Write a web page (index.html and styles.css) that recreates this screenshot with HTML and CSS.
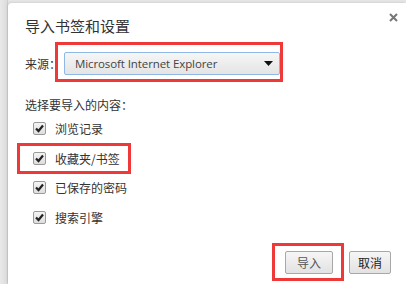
FILE: index.html
```html
<!DOCTYPE html>
<html>
<head>
<meta charset="utf-8">
<link rel="stylesheet" href="styles.css">
</head>
<body>
<div class="strip"></div>
<div class="dialog">
  <div class="close">
    <svg width="9" height="9" viewBox="0 0 9 9"><path d="M1 1L8 8M8 1L1 8" stroke="#777" stroke-width="2"/></svg>
  </div>
  <div class="title">导入书签和设置</div>
  <div class="source">
    <span class="label">来源：</span>
    <div class="select">
      <span>Microsoft Internet Explorer</span>
      <svg width="9" height="5" viewBox="0 0 9 5"><path d="M0 0H9L4.5 5Z" fill="#111"/></svg>
    </div>
  </div>
  <div class="heading">选择要导入的内容：</div>
  <div class="items">
    <div class="item"><span class="cb"><svg width="11" height="11" viewBox="0 0 11 11"><path d="M2 5.5L4.5 8L9 2.5" stroke="#222" stroke-width="2.2" fill="none"/></svg></span>浏览记录</div>
    <div class="item"><span class="cb"><svg width="11" height="11" viewBox="0 0 11 11"><path d="M2 5.5L4.5 8L9 2.5" stroke="#222" stroke-width="2.2" fill="none"/></svg></span>收藏夹/书签</div>
    <div class="item"><span class="cb"><svg width="11" height="11" viewBox="0 0 11 11"><path d="M2 5.5L4.5 8L9 2.5" stroke="#222" stroke-width="2.2" fill="none"/></svg></span>已保存的密码</div>
    <div class="item"><span class="cb"><svg width="11" height="11" viewBox="0 0 11 11"><path d="M2 5.5L4.5 8L9 2.5" stroke="#222" stroke-width="2.2" fill="none"/></svg></span>搜索引擎</div>
  </div>
  <div class="buttons">
    <button class="btn primary">导入</button>
    <button class="btn">取消</button>
  </div>
  <div class="mark mark-source"></div>
  <div class="mark mark-fav"></div>
  <div class="mark mark-import"></div>
</div>
</body>
</html>
```
FILE: styles.css
```css
html, body {
  margin: 0;
  padding: 0;
}
body {
  width: 406px;
  height: 284px;
  overflow: hidden;
  display: flex;
  background: #e6e6e6;
  font-family: "Noto Sans CJK SC", "Liberation Sans", sans-serif;
  font-size: 12px;
  color: #333;
}
.strip {
  width: 7px;
  border-right: 1px solid #cfcfcf;
  background: linear-gradient(to right, #e9e9e9, #dcdcdc);
}
.dialog {
  position: relative;
  flex: 1;
  margin-top: 3px;
  background: #fff;
  border-top-left-radius: 4px;
  padding: 0 17px;
  box-shadow: -1px -1px 2px rgba(0,0,0,0.08);
}
.close {
  position: absolute;
  right: 8px;
  top: 10px;
  line-height: 0;
}
.title {
  margin-top: 13px;
  font-size: 15px;
  line-height: 20px;
  color: #333;
}
.source {
  display: flex;
  align-items: center;
  margin-top: 16px;
  height: 23px;
}
.label {
  width: 39px;
}
.select {
  width: 198px;
  height: 21px;
  border: 1px solid #8fb8e6;
  border-radius: 2px;
  background: linear-gradient(#f6f6f6, #e4e4e4);
  display: flex;
  align-items: center;
  justify-content: space-between;
  padding: 0 6px 0 10px;
  box-sizing: content-box;
  font-family: "Open Sans", "Liberation Sans", sans-serif;
  font-size: 11.5px;
  letter-spacing: -0.1px;
  color: #444;
}
.select span { margin-top: -1px; }
.heading {
  margin-top: 21px;
  line-height: 18px;
}
.items {
  margin-top: 0;
  padding-left: 8px;
  display: flex;
  flex-direction: column;
}
.item {
  display: flex;
  align-items: center;
  height: 29.6px;
}
.cb {
  width: 11px;
  height: 11px;
  border: 1px solid #9a9a9a;
  border-radius: 2px;
  background: linear-gradient(#f4f4f4, #dedede);
  margin-right: 9px;
  line-height: 0;
}
.buttons {
  position: absolute;
  right: 15px;
  top: 248px;
  display: flex;
  gap: 16px;
}
.btn {
  height: 23px;
  padding: 0;
  border: 1px solid #a8a8a8;
  border-radius: 2px;
  background: linear-gradient(#f6f6f6, #e2e2e2);
  font-family: "Noto Sans CJK SC", sans-serif;
  font-size: 12px;
  color: #222;
  width: 42px;
}
.btn.primary {
  width: 48px;
  color: #555;
}
.mark {
  position: absolute;
  border: 3px solid #ef3838;
  box-sizing: border-box;
}
.mark-source { left: 47px; top: 39px; width: 228px; height: 40px; }
.mark-fav { left: 9px; top: 140px; width: 114px; height: 31px; }
.mark-import { left: 264px; top: 240px; width: 72px; height: 38px; }
```
